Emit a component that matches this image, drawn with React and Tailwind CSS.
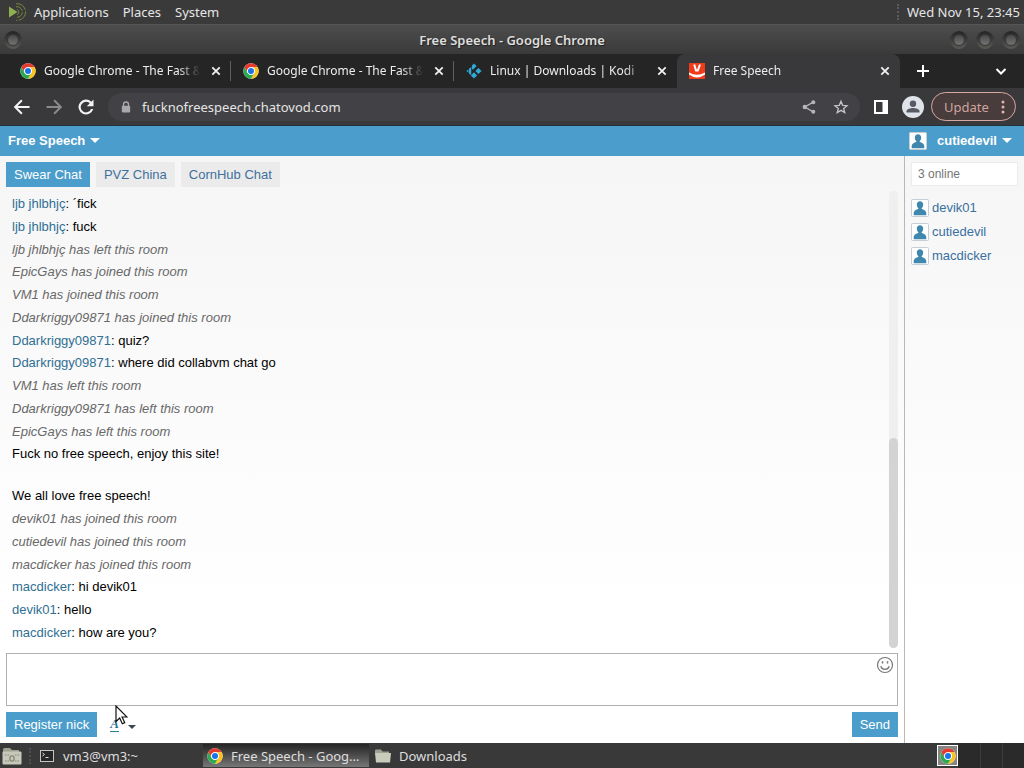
import React from 'react';

const MESSAGES = [
  { nick: 'ljb jhlbhjç', text: '´fick' },
  { nick: 'ljb jhlbhjç', text: 'fuck' },
  { info: 'ljb jhlbhjç has left this room' },
  { info: 'EpicGays has joined this room' },
  { info: 'VM1 has joined this room' },
  { info: 'Ddarkriggy09871 has joined this room' },
  { nick: 'Ddarkriggy09871', text: 'quiz?' },
  { nick: 'Ddarkriggy09871', text: 'where did collabvm chat go' },
  { info: 'VM1 has left this room' },
  { info: 'Ddarkriggy09871 has left this room' },
  { info: 'EpicGays has left this room' },
  { lines: ['Fuck no free speech, enjoy this site!', 'We all love free speech!'] },
  { info: 'devik01 has joined this room' },
  { info: 'cutiedevil has joined this room' },
  { info: 'macdicker has joined this room' },
  { nick: 'macdicker', text: 'hi devik01' },
  { nick: 'devik01', text: 'hello' },
  { nick: 'macdicker', text: 'how are you?' },
];

const USERS = ['devik01', 'cutiedevil', 'macdicker'];

function ChromeLogo({ className = 'size-4' }) {
  return (
    <svg viewBox="0 0 48 48" className={`${className} shrink-0`} aria-hidden="true">
      <circle cx="24" cy="24" r="23" fill="#fff" />
      <path d="M4.1 12.5A23 23 0 0 1 43.9 12.5H24a11.5 11.5 0 0 0-10 17.2z" fill="#e33b2e" />
      <path d="M43.9 12.5A23 23 0 0 1 24 47l10-17.3a11.5 11.5 0 0 0 0-11.5l-3.5-5.7z" fill="#fcc31e" />
      <path d="M24 47A23 23 0 0 1 4.1 12.5l10 17.2A11.5 11.5 0 0 0 34 29.7z" fill="#2da94f" />
      <circle cx="24" cy="24" r="11.5" fill="#fff" />
      <circle cx="24" cy="24" r="9" fill="#1a73e8" />
    </svg>
  );
}

function KodiLogo() {
  return (
    <svg viewBox="0 0 18 18" className="size-4 shrink-0" fill="#2fa9d6" aria-hidden="true">
      <path d="M9 .5 11.900 3.400 8.400 7a1 1 0 0 1-1.700-.7V2.800z" />
      <path d="M5.900 4.500V12.400a.8.8 0 0 1-1.400.5L3.300 11.600V6.500z" />
      <path d="M2.700 7.200V11L.4 9z" />
      <path d="M14 5.500 17.500 9 14 12.500 10.500 9z" />
      <path d="M9 10.500 12.500 14 9 17.500 5.500 14z" />
    </svg>
  );
}

function ChatovodLogo() {
  return (
    <svg viewBox="0 0 16 16" className="size-4 shrink-0" aria-hidden="true">
      <rect width="16" height="16" fill="#f03c1c" />
      <path d="M5.200 1.500 7 7.500 8.800 7.500 11 1.500" fill="none" stroke="#fff" strokeWidth="2" />
      <path d="M0 9.500Q8 14 16 9.500V11.500Q8 17.500 0 11.500z" fill="#fff" />
    </svg>
  );
}

function CloseIcon() {
  return (
    <svg viewBox="0 0 16 16" className="size-4" aria-hidden="true">
      <path d="M4.3 4.3l7.4 7.4M11.7 4.3l-7.4 7.4" stroke="#f1f1f1" strokeWidth="1.8" />
    </svg>
  );
}

function BrowserTab({ icon, title, active, divider }) {
  const tone = active ? 'bg-[#39393b] rounded-t-lg' : 'bg-transparent';
  return (
    <div className={`relative flex h-full min-w-0 flex-[0_1_223px] items-center gap-2 pl-3 pr-[7px] ${tone}`}>
      {icon}
      <span className="min-w-0 flex-1 overflow-hidden whitespace-nowrap [mask-image:linear-gradient(to_right,black_86%,transparent)]">
        {title}
      </span>
      <button type="button" aria-label={`Close ${title}`} className="size-4 shrink-0">
        <CloseIcon />
      </button>
      {divider && <span className="absolute right-0 h-5 w-px bg-[#606062]" />}
    </div>
  );
}

function WindowButton({ label }) {
  return (
    <button
      type="button"
      aria-label={label}
      className="flex size-[18px] items-center justify-center rounded-full bg-linear-to-b from-[#242424] to-[#5c5b57]"
    >
      <span className="size-3 rounded-full border border-[#353535] bg-linear-to-b from-[#4a4a4a] to-[#747474]" />
    </button>
  );
}

function Avatar({ className }) {
  return (
    <svg viewBox="0 0 18 18" className={`${className} shrink-0`} aria-hidden="true">
      <rect x=".5" y=".5" width="17" height="17" rx="1" fill="#fff" stroke="#c6cfd5" />
      <path
        d="M9 2.3c2 0 3.2 1.4 3.2 3.3 0 1.7-.7 2.8-1.5 3.7v.8c2.300.7 4.600 1.700 4.600 4.400V16.200H2.700v-1.700c0-2.700 2.300-3.700 4.600-4.400V9.300C6.500 8.400 5.800 7.300 5.800 5.600 5.800 3.700 7 2.300 9 2.300z"
        fill="#3f87ad"
      />
    </svg>
  );
}

function Caret({ className }) {
  return (
    <svg viewBox="0 0 10 5" className={className} fill="currentColor" aria-hidden="true">
      <path d="M0 0H10L5 5z" />
    </svg>
  );
}

function Folder() {
  return (
    <svg viewBox="0 0 16 14" className="h-[14px] w-4 shrink-0" aria-hidden="true">
      <path d="M0 1.500Q0 .5 1 .5H6L7.500 2.500H14V5H0z" fill="#9da092" />
      <path d="M0 4H16L15 13.500H1z" fill="#c9cbbb" />
    </svg>
  );
}

function DesktopPanel() {
  return (
    <header className="flex h-6 items-center justify-between bg-[#3a3a3b] pl-2 pr-1 text-[#e6e6e6]">
      <nav className="flex items-center gap-[14px]">
        <button type="button" className="flex items-center gap-[7px]">
          <svg viewBox="0 0 19 18" className="h-[18px] w-[19px]" fill="none" aria-hidden="true">
            <path d="M1 3.500 9.500 9 1 14.500z" fill="#8fb04e" />
            <path d="M8 .8A8.300 8.300 0 1 1 8 17.200" stroke="#75883f" strokeDasharray="12 1.500" />
            <path d="M8 3.800A5.300 5.300 0 1 1 8 14.200" stroke="#75883f" strokeDasharray="8 1.500" />
            <path d="M9 6.500A2.800 2.800 0 0 1 9 11.800" stroke="#75883f" />
          </svg>
          Applications
        </button>
        <button type="button">Places</button>
        <button type="button">System</button>
      </nav>
      <div className="flex items-center gap-2">
        <span className="h-4 border-l-2 border-dotted border-[#5c5c5c]" />
        <time>Wed Nov 15, 23:45</time>
      </div>
    </header>
  );
}

function TitleBar() {
  return (
    <div className="flex h-[30px] items-center border-t border-[#555] bg-linear-to-b from-[#4d4d4d] to-[#3a3a3a] px-1">
      <div className="flex flex-1">
        <WindowButton label="Window menu" />
      </div>
      <h1 className="font-semibold text-[#dedede] [text-shadow:1px_1px_1px_#222]">Free Speech - Google Chrome</h1>
      <div className="flex flex-1 justify-end gap-2">
        <WindowButton label="Minimize" />
        <WindowButton label="Maximize" />
        <WindowButton label="Close" />
      </div>
    </div>
  );
}

function TabStrip() {
  return (
    <div className="flex h-[34px] items-center bg-[#252526] pl-2 pr-[15px] text-[12px] text-[#ececec]">
      <BrowserTab icon={<ChromeLogo />} title="Google Chrome - The Fast &" divider />
      <BrowserTab icon={<ChromeLogo />} title="Google Chrome - The Fast &" divider />
      <BrowserTab icon={<KodiLogo />} title="Linux | Downloads | Kodi" />
      <BrowserTab icon={<ChatovodLogo />} title="Free Speech" active />
      <button type="button" aria-label="New tab" className="ml-4 shrink-0">
        <svg viewBox="0 0 14 14" className="size-[14px]" aria-hidden="true">
          <path d="M7 1v12M1 7h12" stroke="#fff" strokeWidth="2" />
        </svg>
      </button>
      <button type="button" aria-label="Search tabs" className="ml-auto shrink-0">
        <svg viewBox="0 0 16 16" className="size-4" fill="none" aria-hidden="true">
          <path d="M3.500 6 8 10.500 12.500 6" stroke="#fff" strokeWidth="2" />
        </svg>
      </button>
    </div>
  );
}

function Toolbar() {
  return (
    <div className="flex h-[38px] items-center border-b border-[#22323b] bg-[#39393b] pl-3 pr-2 text-[#e4e4e4]">
      <div className="flex gap-3">
        <button type="button" aria-label="Back">
          <svg viewBox="0 0 24 24" className="size-5" fill="#f4f4f4" aria-hidden="true">
            <path d="M21 10.800H6.700l6-6L11 3.100 2.100 12l8.900 8.900 1.700-1.700-6-6H21z" />
          </svg>
        </button>
        <button type="button" aria-label="Forward">
          <svg viewBox="0 0 24 24" className="size-5" fill="#8a8a8c" aria-hidden="true">
            <path d="M3 10.800H17.300l-6-6L13 3.100 21.900 12 13 20.900l-1.700-1.700 6-6H3z" />
          </svg>
        </button>
        <button type="button" aria-label="Reload">
          <svg viewBox="0 0 24 24" className="size-5" fill="#f4f4f4" aria-hidden="true">
            <path d="M18.400 5.600A9 9 0 1 0 20.700 14.500H18A6.400 6.400 0 1 1 16.500 7.500L13 11h8V3z" />
          </svg>
        </button>
      </div>
      <div className="ml-3 flex h-7 min-w-0 flex-1 items-center rounded-full bg-[#424246] pl-[13px] pr-[11px]">
        <svg viewBox="0 0 12 14" className="mr-[11px] h-3 w-[10px] shrink-0" aria-hidden="true">
          <path d="M3 6V4a3 3 0 0 1 6 0v2" fill="none" stroke="#a9a9ab" strokeWidth="1.600" />
          <rect x="1" y="5.500" width="10" height="8" rx="1" fill="#a9a9ab" />
        </svg>
        <input
          aria-label="Address"
          defaultValue="fucknofreespeech.chatovod.com"
          className="min-w-0 flex-1 bg-transparent outline-none"
        />
        <button type="button" aria-label="Share" className="mr-4 shrink-0">
          <svg viewBox="0 0 16 16" className="size-4" fill="#b6b6b8" aria-hidden="true">
            <circle cx="3.800" cy="8" r="2.200" />
            <circle cx="12.300" cy="3.200" r="2" />
            <circle cx="12.300" cy="12.800" r="2" />
            <path d="M12.300 3.200 3.800 8l8.500 4.800" fill="none" stroke="#b6b6b8" strokeWidth="1.400" />
          </svg>
        </button>
        <button type="button" aria-label="Bookmark" className="shrink-0">
          <svg viewBox="0 0 24 24" className="size-4" fill="none" aria-hidden="true">
            <path
              d="M12 3.500l2.500 6 6.500.5-5 4.200 1.600 6.300L12 17.100l-5.600 3.400L8 14.200 3 10l6.500-.5z"
              stroke="#c4c4c6"
              strokeWidth="2"
            />
          </svg>
        </button>
      </div>
      <button type="button" aria-label="Side panel" className="ml-[14px] shrink-0">
        <svg viewBox="0 0 14 14" className="size-[14px]" aria-hidden="true">
          <path d="M0 0H14V14H0zM2 2V12H8.500V2z" fill="#fff" fillRule="evenodd" />
        </svg>
      </button>
      <button type="button" aria-label="Profile" className="ml-[14px] shrink-0">
        <svg viewBox="0 0 22 22" className="size-[22px]" aria-hidden="true">
          <circle cx="11" cy="11" r="11" fill="#dfe3ea" />
          <circle cx="11" cy="7.700" r="3.200" fill="#565b63" />
          <path d="M4.500 16.500v-1.200c0-2.300 4-3.300 6.500-3.300s6.500 1 6.500 3.300v1.200z" fill="#565b63" />
        </svg>
      </button>
      <button
        type="button"
        className="ml-[7px] flex h-[29px] w-[85px] shrink-0 items-center justify-between rounded-full border border-[#d8a8a4] bg-[#483c3d] pl-3 pr-[10px] text-[#d0a49e]"
      >
        Update
        <svg viewBox="0 0 4 14" className="h-[14px] w-1" fill="#e2b5ae" aria-hidden="true">
          <circle cx="2" cy="2" r="1.500" />
          <circle cx="2" cy="7" r="1.500" />
          <circle cx="2" cy="12" r="1.500" />
        </svg>
      </button>
    </div>
  );
}

function Message({ message }) {
  if (message.info) return <li className="italic text-[#686868]">{message.info}</li>;
  if (message.lines) {
    return (
      <li className="flex flex-col gap-[23px]">
        {message.lines.map((line) => (
          <p key={line}>{line}</p>
        ))}
      </li>
    );
  }
  return (
    <li>
      <a href="#nick" className="text-[#2f6f93]">{message.nick}</a>: {message.text}
    </li>
  );
}

function ChatPage() {
  return (
    <div className="flex min-h-0 flex-1 flex-col bg-linear-to-b from-[#f5f5f6] to-white to-80% font-['Liberation_Sans',Arial,sans-serif] text-[13px] leading-[19px] text-black">
      <div className="flex h-[30px] shrink-0 items-center justify-between bg-[#4b9dcb] pb-px font-bold text-white [text-shadow:1px_1px_1px_#3a7ea5]">
        <button type="button" className="flex items-center gap-[5px] pl-2">
          Free Speech
          <Caret className="h-[5px] w-[10px]" />
        </button>
        <button type="button" className="flex w-[115px] items-center gap-[5px]">
          <Avatar className="mr-[5px] size-[18px]" />
          cutiedevil
          <Caret className="h-[5px] w-[10px]" />
        </button>
      </div>
      <div className="flex min-h-0 flex-1">
        <main className="flex min-w-0 flex-1 flex-col p-[6px]">
          <nav className="flex gap-[6px]">
            <button type="button" className="h-[25px] bg-[#4b9dcb] px-2 text-white">Swear Chat</button>
            <button type="button" className="h-[25px] bg-[#ebebeb] px-2 text-[#3f709c]">PVZ China</button>
            <button type="button" className="h-[25px] bg-[#ebebeb] px-2 text-[#3f709c]">CornHub Chat</button>
          </nav>
          <div className="mt-1 flex min-h-0 flex-1">
            <ul className="flex min-w-0 flex-1 flex-col justify-between overflow-hidden px-[6px] pb-[6px] pt-[3px]">
              {MESSAGES.map((message, i) => (
                <Message key={i} message={message} />
              ))}
            </ul>
            <div className="flex w-[9px] flex-col justify-end rounded-full bg-[#efeff0]">
              <div className="h-[46%] rounded-full bg-[#d3d3d4]" />
            </div>
          </div>
          <div className="relative mt-[5px]">
            <textarea
              aria-label="Message"
              className="block h-[53px] w-full resize-none border border-[#b0b0b4] bg-white p-1 pr-8 outline-none"
            />
            <button type="button" aria-label="Smileys" className="absolute right-1 top-[3px]">
              <svg viewBox="0 0 18 18" className="size-[18px]" fill="none" stroke="#77777a" aria-hidden="true">
                <circle cx="9" cy="9" r="7.500" strokeWidth="1.200" />
                <path d="M4.800 10.200a4.400 4.400 0 0 0 8.400 0" strokeWidth="1.300" />
                <path d="M6.500 5.200v2.300M11.500 5.200v2.300" strokeWidth="1.500" />
              </svg>
            </button>
          </div>
          <div className="mt-[6px] flex items-center">
            <button type="button" className="h-[25px] bg-[#4b9dcb] px-2 text-white">Register nick</button>
            <button type="button" aria-label="Text style" className="relative ml-[13px] flex items-center gap-[9px] text-[#3a4650]">
              <span className="border-b border-[#2f7f95] font-['Liberation_Serif',serif] font-bold italic leading-[14px] text-[#2f6f93]">
                A
              </span>
              <Caret className="mt-1 h-1 w-2" />
              <svg viewBox="0 0 13 20" className="absolute -top-3 left-[5px] h-5 w-[13px]" aria-hidden="true">
                <path
                  d="M1 1V16.500L4.700 13 7.300 18.700 9.700 17.600 7.100 12H12z"
                  fill="#fff"
                  stroke="#111"
                  strokeWidth="1.200"
                />
              </svg>
            </button>
            <button type="button" className="ml-auto h-[25px] bg-[#4b9dcb] px-2 text-white">Send</button>
          </div>
        </main>
        <aside className="w-[120px] shrink-0 border-l border-[#b8b8ba] p-[6px]">
          <input
            aria-label="Search online users"
            placeholder="3 online"
            className="block h-6 w-full border border-[#ececec] bg-white px-[6px] text-[12px] outline-none placeholder:text-[#757575]"
          />
          <ul className="mt-[9px]">
            {USERS.map((user) => (
              <li key={user} className="flex h-6 items-end gap-[3px] pb-[2px]">
                <Avatar className="size-[18px]" />
                <a href="#user" className="text-[#3a6f9e]">{user}</a>
              </li>
            ))}
          </ul>
        </aside>
      </div>
    </div>
  );
}

function Taskbar() {
  return (
    <footer className="flex h-[25px] shrink-0 items-center bg-[#39393a] pl-[2px] text-[#dedede]">
      <button type="button" aria-label="Show desktop">
        <svg viewBox="0 0 20 18" className="h-[18px] w-5" aria-hidden="true">
          <path d="M1 2.500Q1 1 2.500 1H8L10 3H17V6H1z" fill="#9fa092" />
          <rect x=".5" y="4.500" width="19" height="13" rx="1" fill="#c7c8b9" />
          <path d="M3 8h4M13 8h4M3 14h4M13 14h4" stroke="#85877a" strokeDasharray="1.500 1" />
          <rect x="8" y="9" width="4" height="5" rx="1" fill="none" stroke="#6f7167" />
        </svg>
      </button>
      <span className="ml-[7px] h-4 border-l-2 border-dotted border-[#505050]" />
      <button type="button" className="ml-[9px] flex w-[163px] items-center gap-[9px] text-left">
        <svg viewBox="0 0 14 12" className="h-3 w-[14px] shrink-0" fill="none" aria-hidden="true">
          <rect x=".5" y=".5" width="13" height="11" fill="#272727" stroke="#c4c4c4" />
          <path d="M2.500 3l2 1.500-2 1.500M5.500 7.500h3" stroke="#ddd" />
        </svg>
        vm3@vm3:~
      </button>
      <button
        type="button"
        className="flex h-[23px] w-[166px] items-center gap-2 whitespace-nowrap bg-linear-to-b from-[#262626] to-[#777] px-1 text-left"
      >
        <ChromeLogo />
        Free Speech - Goog…
      </button>
      <button type="button" className="ml-[6px] flex items-center gap-2">
        <Folder />
        Downloads
      </button>
      <div className="ml-auto flex h-full items-center">
        <button type="button" aria-label="Workspace 1" className="flex size-[21px] items-center justify-center border border-white bg-[#858585]">
          <ChromeLogo />
        </button>
        <button type="button" aria-label="Workspace 2" className="h-full w-[22px] bg-[#2a2a2b]" />
        <button type="button" aria-label="Workspace 3" className="h-full w-[22px] border-l border-[#3d3d3d] bg-[#2a2a2b]" />
        <button type="button" aria-label="Workspace 4" className="h-full w-[22px] border-l border-[#3d3d3d] bg-[#2a2a2b]" />
      </div>
    </footer>
  );
}

export default function App() {
  return (
    <div className="flex h-screen flex-col overflow-hidden font-['Noto_Sans',sans-serif] text-[13px] leading-5">
      <DesktopPanel />
      <TitleBar />
      <TabStrip />
      <Toolbar />
      <ChatPage />
      <Taskbar />
    </div>
  );
}
